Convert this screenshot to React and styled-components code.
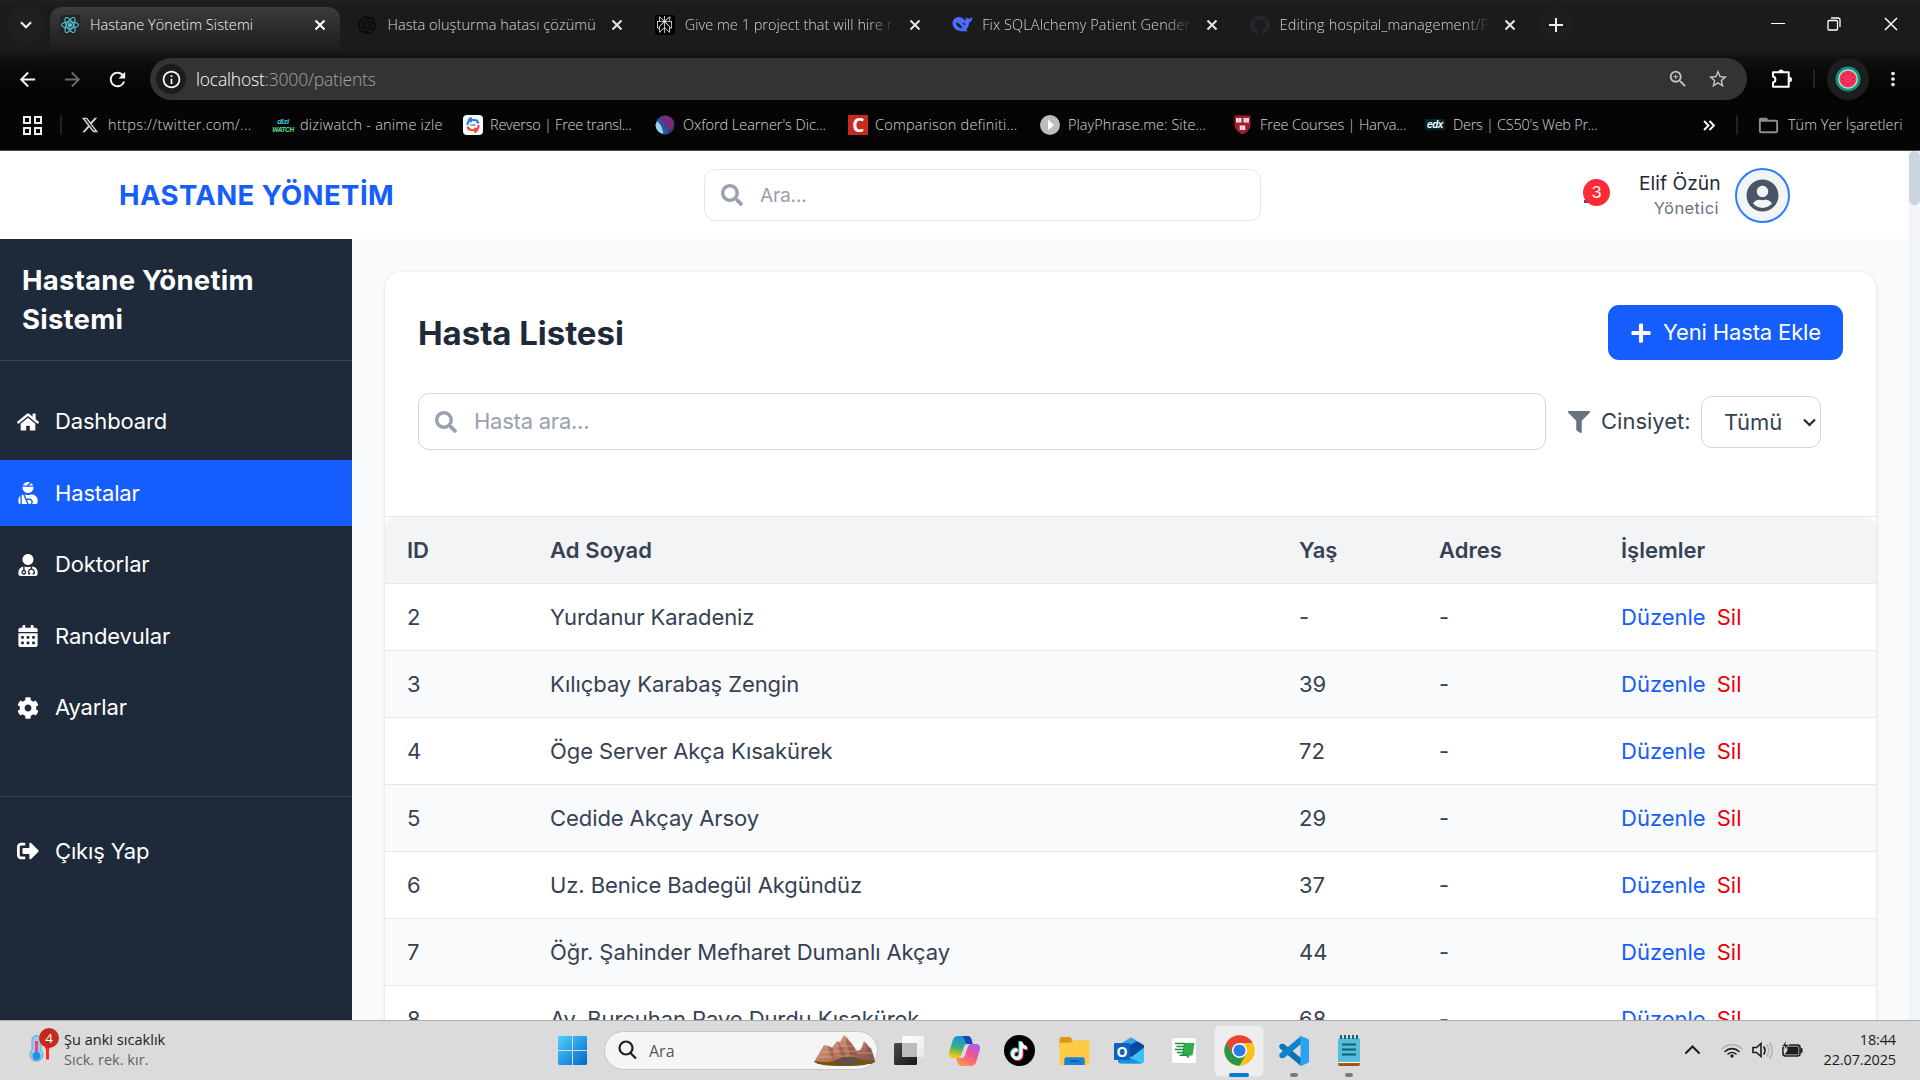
import React from 'react';
import styled, { createGlobalStyle, css } from 'styled-components';
import {
  FaHome, FaUserInjured, FaUserMd, FaCalendarAlt, FaCog, FaSignOutAlt,
  FaSearch, FaFilter, FaPlus, FaUserCircle, FaGithub, FaTiktok,
} from 'react-icons/fa';
import { FaXTwitter } from 'react-icons/fa6';
import { SiOpenai, SiPerplexity } from 'react-icons/si';
import {
  MdArrowBack, MdArrowForward, MdRefresh, MdZoomIn, MdStarBorder,
  MdMoreVert, MdFolderOpen, MdInfoOutline,
} from 'react-icons/md';

const Global = createGlobalStyle`
  * { box-sizing: border-box; }
  html, body { margin: 0; padding: 0; overflow: hidden; background: #050505; }
  svg { display: block; flex: none; }
`;

const ui = '"Open Sans", "Noto Sans", sans-serif';

const Screen = styled.div`
  width: 1920px;
  height: 1080px;
  display: flex;
  flex-direction: column;
  overflow: hidden;
  font-family: ${ui};
`;

/* ---------- browser chrome ---------- */

const Browser = styled.div`
  height: 151px;
  flex: none;
  display: flex;
  flex-direction: column;
  border-bottom: 1px solid #4e4c4e;
  background: linear-gradient(#202020 0, #1b1b1b 10px, #1b1b1b 50px, #111 58px, #0a0a0a 70px, #050505 88px);
`;

const TabStrip = styled.div`
  height: 50px;
  flex: none;
  display: flex;
  align-items: center;
  padding: 7px 0 0 9px;
`;

const TabSearch = styled.div`
  width: 33px;
  height: 35px;
  margin: 0 8px 8px 0;
  display: flex;
  align-items: center;
  justify-content: center;
  border-radius: 11px;
  background: #1f1f1f;
`;

const Tab = styled.div`
  width: 290px;
  height: 43px;
  flex: none;
  display: flex;
  align-items: center;
  padding: 0 15px 8px 10px;
  margin-right: 7.4px;
  border-radius: 12px 12px 0 0;
  background: ${(p) => (p.$active ? 'linear-gradient(#3c3c3c, #1c1c1c)' : 'transparent')};
`;

const TabIcon = styled.div`
  width: 20px;
  height: 20px;
  flex: none;
  display: flex;
  align-items: center;
  justify-content: center;
  margin-right: 10px;
  border-radius: 3px;
  background: ${(p) => p.$bg || 'transparent'};
`;

const TabTitle = styled.div`
  flex: 1;
  white-space: nowrap;
  font-size: 14.5px;
  line-height: 20px;
  letter-spacing: ${(p) => p.$ls || 0}px;
  color: ${(p) => (p.$active ? '#f4f4f4' : '#d4d4d4')};
  font-weight: 300;
  ${(p) => p.$fade && css`
    mask-image: linear-gradient(90deg, #000 calc(100% - 26px), transparent 100%);
  `}
`;

const TabClose = styled.div`
  width: 12px;
  flex: none;
  margin-left: 14px;
  margin-right: -1px;
`;

const NewTab = styled.div`
  width: 34px;
  height: 35px;
  margin: 0 0 8px 2px;
  border-radius: 17px;
  background: #1e1e1e;
  display: flex;
  align-items: center;
  justify-content: center;
`;

const WindowButtons = styled.div`
  flex: 1;
  display: flex;
  justify-content: flex-end;
  align-items: center;
  gap: 42px;
  padding: 0 21px 10px 0;
`;

const Toolbar = styled.div`
  height: 58px;
  flex: none;
  display: flex;
  align-items: center;
  padding: 0 16px;
  color: #f2f2f2;
`;

const NavButton = styled.div`
  width: 45px;
  flex: none;
  display: flex;
  color: ${(p) => (p.$dim ? '#6a6a6a' : '#f4f4f4')};
`;

const AddressBar = styled.div`
  width: 1597px;
  height: 42px;
  flex: none;
  margin: 0 24px 0 -1px;
  display: flex;
  align-items: center;
  padding: 0 18px 0 6px;
  border-radius: 21px;
  background: #333;
  font-size: 17.5px;
  font-weight: 300;
  color: #a3a3a3;
  b { font-weight: 300; color: #fff; }
`;

const SiteInfo = styled.div`
  width: 30px;
  height: 30px;
  margin-right: 10px;
  display: flex;
  align-items: center;
  justify-content: center;
  border-radius: 50%;
  background: #1c1c1c;
  color: #fff;
`;

const Url = styled.div`
  flex: 1;
  letter-spacing: -0.18px;
`;

const BarIcons = styled.div`
  display: flex;
  gap: 18px;
  color: #c4c4c4;
`;

const Divider = styled.div`
  width: 2px;
  height: 20px;
  flex: none;
  border-radius: 1px;
  background: #222;
  margin: ${(p) => p.$m};
`;

const Profile = styled.div`
  width: 42px;
  height: 42px;
  flex: none;
  margin-right: 13px;
  display: flex;
  align-items: center;
  justify-content: center;
  border-radius: 50%;
  background: #1d1d1d;
`;

const Bookmarks = styled.div`
  flex: 1;
  display: flex;
  align-items: center;
  padding: 0 17px 8px 23px;
  color: #d6d6d6;
`;

const Bookmark = styled.div`
  width: ${(p) => p.$w}px;
  flex: none;
  display: flex;
  align-items: center;
  white-space: nowrap;
  font-size: 14.5px;
  font-weight: 300;
  line-height: 20px;
  letter-spacing: ${(p) => p.$ls || 0}px;
  span { margin-left: ${(p) => p.$gap || 8}px; }
`;

const Favicon = styled.div`
  width: 20px;
  height: 20px;
  flex: none;
  display: flex;
  flex-direction: column;
  align-items: center;
  justify-content: center;
  font: ${(p) => p.$font};
  letter-spacing: -0.4px;
  background: ${(p) => p.$bg || 'transparent'};
  color: ${(p) => p.$fg || '#fff'};
  em { color: #5fe08f; font-size: 6.5px; line-height: 7px; }
`;

const Spacer = styled.div`
  flex: 1;
`;

/* ---------- application ---------- */

const Page = styled.div`
  height: 869px;
  flex: none;
  display: flex;
  overflow: hidden;
  background: #f9fafb;
  font-family: Inter, "Liberation Sans", sans-serif;
  font-size: 22px;
  line-height: 33px;
  color: #364153;
`;

const AppColumn = styled.div`
  width: 1909px;
  display: flex;
  flex-direction: column;
`;

const ScrollTrack = styled.div`
  width: 11px;
  background: #f1f5f9;
`;

const ScrollThumb = styled.div`
  height: 54px;
  border-radius: 6px;
  background: #cbd5e1;
`;

const Header = styled.header`
  height: 88px;
  flex: none;
  display: flex;
  align-items: center;
  padding: 0 119px;
  background: #fff;
`;

const Brand = styled.div`
  width: 585px;
  font-size: 27.5px;
  font-weight: 700;
  letter-spacing: 0.42px;
  color: #155dfc;
`;

const SearchBox = styled.div`
  width: ${(p) => p.$w}px;
  height: ${(p) => p.$h}px;
  display: flex;
  align-items: center;
  gap: 17px;
  padding: 0 0 0 16px;
  border: 1.4px solid ${(p) => p.$line};
  border-radius: 11px;
  background: #fff;
  font-size: ${(p) => p.$size || 22}px;
  letter-spacing: -0.24px;
  color: #99a1af;
`;

const Bell = styled.div`
  position: relative;
  width: 28px;
  height: 28px;
  margin-right: 28px;
  color: #4a5565;
`;

const Badge = styled.div`
  position: absolute;
  left: 0;
  top: -2px;
  width: 27px;
  height: 27px;
  border-radius: 50%;
  background: #fb2c36;
  color: #fff;
  font-size: 16.5px;
  line-height: 27px;
  text-align: center;
`;

const BellDrop = styled.div`
  width: 5px;
  height: 3px;
  margin: 19px 0 0 1px;
  background: #4a5565;
`;

const UserText = styled.div`
  width: 80px;
  text-align: right;
  margin: -1px 16px 0 0;
  font-size: 19.25px;
  line-height: 27px;
  white-space: nowrap;
  color: #1e2939;
  small {
    display: block;
    font-size: 16.5px;
    line-height: 22px;
    letter-spacing: 0.4px;
    color: #6a7282;
  }
`;

const Avatar = styled.div`
  width: 55px;
  height: 55px;
  display: flex;
  align-items: center;
  justify-content: center;
  border: 2px solid #2b7fff;
  border-radius: 50%;
  background: #f3f4f6;
  color: #4a5565;
`;

const Body = styled.div`
  flex: 1;
  min-height: 0;
  display: flex;
`;

const Sidebar = styled.aside`
  width: 352px;
  flex: none;
  background: #1e2939;
  color: #fff;
`;

const SideTitle = styled.div`
  height: 122px;
  padding: 22px;
  border-bottom: 1px solid #364153;
  font-size: 27.5px;
  line-height: 38.5px;
  letter-spacing: 0.24px;
  font-weight: 700;
`;

const SideNav = styled.nav`
  display: flex;
  flex-direction: column;
  gap: 5.5px;
  padding: 27.5px 0;
  & + & {
    margin-top: 27.5px;
    padding: 21.5px 0;
    border-top: 1px solid #364153;
  }
`;

const SideItem = styled.div`
  height: 66px;
  display: flex;
  align-items: center;
  gap: 16.5px;
  padding-left: 16.5px;
  letter-spacing: -0.16px;
  background: ${(p) => (p.$active ? '#155dfc' : 'transparent')};
`;

const Main = styled.main`
  flex: 1;
  padding: 33px;
`;

const Card = styled.section`
  height: 900px;
  border-radius: 16.5px;
  background: #fff;
  box-shadow: 0 1px 4px rgba(0, 0, 0, 0.13);
`;

const CardTop = styled.div`
  height: 245px;
  padding: 33px;
  border-bottom: 1px solid #e5e7eb;
`;

const TitleRow = styled.div`
  display: flex;
  align-items: center;
  justify-content: space-between;
  height: 55px;
  margin-bottom: 33px;
`;

const Title = styled.h1`
  margin: 0;
  font-size: 33px;
  line-height: 44px;
  font-weight: 700;
  letter-spacing: -0.05px;
  color: #1e2939;
`;

const AddButton = styled.div`
  width: 235px;
  height: 55px;
  display: flex;
  align-items: center;
  gap: 11px;
  padding-left: 22px;
  border-radius: 11px;
  letter-spacing: -0.15px;
  background: #155dfc;
  color: #fff;
`;

const FilterRow = styled.div`
  display: flex;
  align-items: center;
`;

const FilterLabel = styled.div`
  width: 133px;
  flex: none;
  display: flex;
  align-items: center;
  gap: 11px;
  margin-left: 22px;
  white-space: nowrap;
  svg { color: #6a7282; }
`;

const Select = styled.div`
  width: 120px;
  height: 52px;
  display: flex;
  align-items: center;
  justify-content: space-between;
  padding: 0 4px 0 22px;
  margin: 1px 0 0 0;
  border: 1.4px solid #d1d5dc;
  border-radius: 11px;
`;

const Row = styled.div`
  display: grid;
  grid-template-columns: 143px 749px 140px 182px 1fr;
  height: 67px;
  align-items: center;
  border-bottom: 1px solid #e5e7eb;
  background: ${(p) => (p.$odd ? '#f9fafb' : '#fff')};
  & > div { padding-left: 22px; white-space: nowrap; }
  & > div:nth-child(2) { letter-spacing: ${(p) => (p.$head ? 0.1 : -0.08)}px; }
  ${(p) => p.$head && css`
    background: #f3f4f6;
    border-radius: 11px 11px 0 0;
    font-weight: 600;
  `}
`;

const Actions = styled.div`
  display: flex;
  gap: 11px;
  color: #155dfc;
  span { color: #e7000b; }
`;

/* ---------- taskbar ---------- */

const Taskbar = styled.div`
  height: 60px;
  flex: none;
  display: flex;
  border-top: 1px solid #acacac;
  background: #dbdbdb;
  color: #1b1b1b;
`;

const Weather = styled.div`
  width: 530px;
  display: flex;
  padding: 2px 0 0 28px;
  gap: 4px;
  font-size: 14.5px;
  line-height: 20px;
  & > div:last-child { padding-top: 7px; letter-spacing: 0.03px; }
  small { display: block; font-size: 14.5px; color: #616161; }
`;

const Dock = styled.div`
  width: 850px;
  display: flex;
  align-items: center;
  padding-left: 28px;
`;

const StartSearch = styled.div`
  width: 274px;
  height: 39px;
  margin: 0 0 1px 17px;
  display: flex;
  align-items: center;
  padding: 0 2px 0 13px;
  border-radius: 20px;
  border: 1px solid #c6c6c6;
  background: #f5f5f5;
  font-size: 16px;
  color: #555;
  span { flex: 1; padding: 1px 0 0 11px; }
`;

const DockItem = styled.div`
  position: relative;
  width: 48px;
  height: 50px;
  margin-right: 7px;
  flex: none;
  display: flex;
  align-items: center;
  justify-content: center;
  border-radius: 5px;
  background: ${(p) => (p.$active ? '#eee' : 'transparent')};
  box-shadow: ${(p) => (p.$active ? '0 0 0 1px #e3e3e3' : 'none')};
`;

const Running = styled.i`
  position: absolute;
  bottom: -1px;
  width: ${(p) => (p.$active ? 20 : 8)}px;
  height: 4px;
  border-radius: 2px;
  background: ${(p) => (p.$active ? '#0a78d4' : '#7b7b7b')};
`;

const Tray = styled.div`
  flex: 1;
  display: flex;
  align-items: center;
  justify-content: flex-end;
  padding: 0 24px 2px 0;
`;

const Clock = styled.div`
  width: 93px;
  text-align: right;
  font-size: 14.5px;
  line-height: 20px;
  letter-spacing: -0.15px;
  white-space: nowrap;
`;

/* ---------- drawings ---------- */

const Cross = ({ color = '#e6e6e6', size = 12, w = 2 }) => (
  <svg width={size} height={size} viewBox="0 0 12 12" stroke={color} strokeWidth={w}>
    <path d="M1.5 1.5l9 9M10.5 1.5l-9 9" />
  </svg>
);

const ReactMark = () => (
  <svg width="20" height="20" viewBox="0 0 20 20" fill="none" stroke="#58c4dc" strokeWidth="1.1">
    <rect width="20" height="20" rx="2" fill="#242424" stroke="none" />
    <ellipse cx="10" cy="10" rx="8.5" ry="3.3" />
    <ellipse cx="10" cy="10" rx="8.5" ry="3.3" transform="rotate(60 10 10)" />
    <ellipse cx="10" cy="10" rx="8.5" ry="3.3" transform="rotate(120 10 10)" />
    <circle cx="10" cy="10" r="1.5" fill="#58c4dc" />
  </svg>
);

const Whale = () => (
  <svg width="21" height="17" viewBox="0 0 21 17">
    <path fill="#4d6bfe" d="M.5 6.5C1 3 4 1 7.500 1c1.500 0 2 .8 3.500 1.600C12 3.200 12.500 4 13.500 4.600c.5-1 .4-2 1-3.600.4 1 .9 1.500 2 1.600 1.300.1 2.500-.6 4-1.100-.2 2.500-1.200 4.300-3.300 5-.3 3.300-1.200 5.300-3.200 7 .6.5 1.300.8 2 1.200-1.800.9-3.700.8-5 .4C5.500 16.200.2 12 .5 6.500z" />
    <path fill="#1c1c1c" d="M4 6.500c2.500 0 5 2.500 6.500 5.500-2.500.3-6-1.200-6.500-5.500zM10.500 6.800c1.400-.2 2.600.6 3.200 2.200-1.400.2-2.600-.6-3.200-2.200z" />
  </svg>
);

const Puzzle = () => (
  <svg width="22" height="22" viewBox="0 0 22 22">
    <path d="M2 4.200h15.700v14.600H2v-4.300c1.500-.3 2.400-1.500 2.400-3S3.500 8.800 2 8.500z" fill="none" stroke="#fff" strokeWidth="2" strokeLinejoin="round" />
    <path d="M7.300 4.500a2.700 3 0 0 1 5.400 0zM18 8.800a3 2.700 0 0 1 0 5.400z" fill="#fff" />
  </svg>
);

const Melon = () => (
  <svg width="26" height="26" viewBox="0 0 26 26">
    <circle cx="13" cy="13" r="12.500" fill="#0e9384" />
    <circle cx="13" cy="13" r="9.800" fill="#b9ecd9" />
    <circle cx="13" cy="13" r="8.600" fill="#f2325a" />
    <g fill="#8d1d3c">
      <circle cx="9" cy="9" r=".7" /><circle cx="13" cy="7.500" r=".7" /><circle cx="17" cy="9" r=".7" />
      <circle cx="7.500" cy="13" r=".7" /><circle cx="18.500" cy="13" r=".7" />
      <circle cx="9" cy="17" r=".7" /><circle cx="13" cy="18.500" r=".7" /><circle cx="17" cy="17" r=".7" />
    </g>
  </svg>
);

const Shield = () => (
  <svg width="17" height="20" viewBox="0 0 17 20">
    <path d="M.5.5h16v9c0 5-4 8-8 10-4-2-8-5-8-10z" fill="#a51c30" />
    <path d="M2 3h5.500v4.500H2zM9.500 3H15v4.500H9.500zM5.700 10.500h5.600V15H5.700z" fill="#f1dfe1" />
    <path d="M4.700 3v4.500M12.300 3v4.500M8.500 10.500V15" stroke="#d9a5ac" strokeWidth=".8" />
  </svg>
);

const Reverso = () => (
  <svg width="20" height="20" viewBox="0 0 20 20" fill="none" strokeWidth="2.200">
    <rect width="20" height="20" rx="4" fill="#f7f9fb" />
    <path d="M4.500 10V9a4 4 0 0 1 4-4h3a4 4 0 0 1 3.800 3.500M8.500 2.500L6 5l2.500 2" stroke="#2d7de0" />
    <path d="M15.500 10v1a4 4 0 0 1-4 4h-3a4 4 0 0 1-3.800-3.500M11.500 17.500L14 15l-2.500-2" stroke="#ee4a3a" />
    <path d="M7.500 10h5" stroke="#2b5fa8" strokeWidth="1.500" strokeDasharray="1.200 .6" />
  </svg>
);

const Oxford = () => (
  <svg width="20" height="20" viewBox="0 0 20 20">
    <circle cx="10" cy="10" r="9.500" fill="#24407e" />
    <path d="M8 .8a9.500 9.500 0 0 1 11.300 7.500C17 13 14 15 13 17 12 11 8 6 4 3.500A9 9 0 0 1 8 .8z" fill="#7b2a78" />
    <path d="M2 6c4 3 6 8 6.500 13A9.500 9.500 0 0 1 .5 10z" fill="#9fd3ea" />
    <path d="M4 3.500C9 7 12 12 12.500 19L8.500 19.300C8 13 6 9 2 6z" fill="#2858a8" />
  </svg>
);

const Play = () => (
  <svg width="20" height="20" viewBox="0 0 20 20">
    <circle cx="10" cy="10" r="10" fill="#bcbcbc" />
    <path d="M8 4.500l6 5.500-6 5.500z" fill="#fff" />
  </svg>
);

const Windows = () => (
  <svg width="29" height="29" viewBox="0 0 29 29">
    <defs>
      <linearGradient id="win" gradientUnits="userSpaceOnUse" x1="0" y1="0" x2="29" y2="29">
        <stop stopColor="#4fd0ff" /><stop offset="1" stopColor="#0067c8" />
      </linearGradient>
    </defs>
    <path fill="url(#win)" d="M1 0h13v14H0V1zM15 0h13l1 1v13H15zM0 15h14v14H1l-1-1zM15 15h14v13l-1 1H15z" />
  </svg>
);

const Mountain = () => (
  <svg width="61" height="31" viewBox="0 0 61 31">
    <defs>
      <linearGradient id="rock" x1="0" x2="1" y1="0" y2="1">
        <stop stopColor="#e0a98c" /><stop offset=".5" stopColor="#bd7a62" /><stop offset="1" stopColor="#6f4a49" />
      </linearGradient>
    </defs>
    <path d="M0 27l3-5 4-7 3-5 5 1 3 2 5-7 3 1 4-7 5 6 3 3 5 7 3-1 2-3 2-6 5 6 2 1 3 9 1 5-4 2H4z" fill="url(#rock)" />
    <path d="M32 1l1 10 5 13 5-3-5-12zM52 7l1 9 5 7-2-9zM14 11l2 9 4 6-1-13zM24 7l1 9 5 9 1-9z" fill="#7d4740" opacity=".5" />
    <path d="M8 17h12M22 11h16M20 16h22M44 18h14M5 22h14M24 21h17" stroke="#f0c3a8" strokeWidth=".8" opacity=".55" />
    <path d="M0 26c8 1 16 2 22-1 8-4 18-4 24-1 5 2 10 2 14 2-4 4-12 5-30 5S3 30 0 26z" fill="#74540f" />
    <path d="M20 27c5-5 20-6 27-1-6 4-20 4-27 1z" fill="#5f514d" />
  </svg>
);

const TaskView = () => (
  <svg width="30" height="31" viewBox="0 0 30 31">
    <defs>
      <linearGradient id="tv" x1="0" x2="1" y1="0" y2="1"><stop stopColor="#4a4a4a" /><stop offset="1" stopColor="#161616" /></linearGradient>
      <linearGradient id="tw" x1="0" x2="1" y1="0" y2="1"><stop stopColor="#fff" /><stop offset="1" stopColor="#e9e9e9" /></linearGradient>
    </defs>
    <rect y="8" width="23" height="22" rx="1.500" fill="url(#tv)" />
    <rect x="8" y="1" width="22" height="21" rx="1.500" fill="url(#tw)" />
    <path d="M8 8h15v14H9.500L8 20.500z" fill="#bdbdbd" />
  </svg>
);

const Copilot = () => (
  <svg width="31" height="30" viewBox="0 0 31 30">
    <defs>
      <linearGradient id="cpa" x1=".3" x2=".1" y1="0" y2="1"><stop stopColor="#1b8fe8" /><stop offset=".5" stopColor="#3fb07a" /><stop offset=".9" stopColor="#f2c80f" /></linearGradient>
      <linearGradient id="cpb" x1=".8" x2=".2" y1="0" y2="1"><stop stopColor="#a55cf0" /><stop offset=".45" stopColor="#f0568f" /><stop offset="1" stopColor="#ff9a4a" /></linearGradient>
    </defs>
    <path d="M9 0h9c3 0 4 1.500 5 5l.6 3H19c-2.500 0-3.500 1-4.300 3.500L12 19.500c-.7 2-2 2.500-4 2.500H4c-3.500 0-4.500-2.500-3.800-6L3.500 5C4.500 1.500 6 0 9 0z" fill="url(#cpa)" />
    <path d="M16 0h2c3 0 4 1.500 5 5l.6 3H19c-2 0-3-2-3.600-4.500C15 1.800 14 0 12 0z" fill="#1747b5" />
    <path d="M22 30h-9c-3 0-4-1.500-5-5l-.8-3H12c2.500 0 3.500-1 4.300-3.500L19 10.500C19.700 8.500 21 8 23 8h4c3.500 0 4.500 2.500 3.800 6L27.500 25c-1 3.500-2.500 5-5.500 5z" fill="url(#cpb)" />
  </svg>
);

const TikTokDisc = styled.div`
  width: 31px;
  height: 31px;
  display: flex;
  align-items: center;
  justify-content: center;
  border-radius: 50%;
  background: #000;
  color: #fff;
  svg { filter: drop-shadow(-1px -1px 0 #25f4ee) drop-shadow(1px 1px 0 #fe2c55); }
`;

const Folder = () => (
  <svg width="31" height="28" viewBox="0 0 31 29">
    <path d="M0 2Q0 0 2 0h8q1 0 2 1l2 3h15v6H0z" fill="#dc9a0b" />
    <path d="M0 6h11l3-2.500h15.500q1.500 0 1.500 1.500v24H0z" fill="#fdcb45" />
    <path d="M5 29v-6q0-2 2-2h17q2 0 2 2v6z" fill="#1a7fd6" />
    <path d="M11 25h9" stroke="#0c4f96" strokeWidth="1.500" />
  </svg>
);

const OutlookLetter = styled.div`
  position: absolute;
  left: 9px;
  top: 17px;
  width: 16px;
  height: 17px;
  border-radius: 1px;
  background: #0f62bd;
  color: #fff;
  font: 700 14px/17px "Open Sans", sans-serif;
  text-align: center;
`;

const Outlook = () => (
  <svg width="31" height="28" viewBox="0 0 31 27">
    <path d="M4 8L17 0l13 8v5H4z" fill="#1a78cf" />
    <path d="M4 8l13-8 5 3L9 13H4z" fill="#3aa3ea" />
    <path d="M10 10L24 4l6 4v3L17 20z" fill="#0b4aa2" />
    <path d="M30 10v13q0 3-3 3H7q-3 0-3-3v-9l12 7z" fill="#35c2f6" />
    <path d="M4 14l24 12H7q-3 0-3-3z" fill="#1d8fe0" />
  </svg>
);

const GreenNote = () => (
  <svg width="24" height="25" viewBox="0 0 24 25">
    <rect width="24" height="25" rx="2.500" fill="#fff" />
    <path d="M12 5h10.500l-2 12.500h-3l-1 3-3-3H10z" fill="#2fae4e" />
    <path d="M3 5.500h10M4.500 8.500h8M3 11.500h9M5 14.500h7M7.500 17.300h8" stroke="#1e8f3e" strokeWidth="1.500" />
  </svg>
);

const ChromeMark = () => (
  <svg width="31" height="31" viewBox="0 0 48 48">
    <circle cx="24" cy="24" r="23.500" fill="#fbc116" />
    <path d="M3.650 12.250A23.500 23.500 0 0 1 44.350 12.250H24L13.600 30z" fill="#ea4335" />
    <path d="M3.650 12.250A23.500 23.500 0 0 0 24 47.500l10.200-17.600H13.800z" fill="#279847" />
    <circle cx="24" cy="24" r="11.750" fill="#fff" />
    <circle cx="24" cy="24" r="9.300" fill="#2c7be8" />
  </svg>
);

const Code = () => (
  <svg width="30" height="30" viewBox="0 0 30 30">
    <path d="M0 10l2-2.200L5 8l17 14v8L1 12.500z" fill="#1070b3" />
    <path d="M0 20l2 2.200L5 22 22 8V0L1 17.500z" fill="#0d83cf" />
    <path d="M22 0l7 3q1 .5 1 1.500v21q0 1-1 1.500l-7 3-2-1q1.500.3 1.500-2V3q0-2.300-1.500-2z" fill="#2ba1f2" />
  </svg>
);

const Notepad = () => (
  <svg width="23" height="31" viewBox="0 0 23 31">
    <rect x="0" y="3" width="22" height="26" rx="2" fill="#54bdd8" />
    <path d="M0 28h22v1q0 2-2 2H2q-2 0-2-2z" fill="#a1500f" />
    <path d="M0 27.500h22" stroke="#f3f3f3" strokeWidth="1.200" />
    <path d="M4 9.500h14M4 14.500h14M4 19.500h14" stroke="#0e5e78" strokeWidth="1.800" />
    <path d="M3 0v4M7 0v4M11 0v4M15 0v4M19 0v4" stroke="#16617b" strokeWidth="2" />
  </svg>
);

const Thermometer = () => (
  <svg width="32" height="48" viewBox="0 0 32 48">
    <path d="M4 17a4 4 0 0 1 9 0v10a6.500 6.500 0 1 1-9 0z" fill="#9cc8ee" stroke="#6a9fd0" />
    <path d="M8.500 18v14" stroke="#e8467c" strokeWidth="3" />
    <circle cx="8.500" cy="33" r="4" fill="#1596e8" />
    <path d="M19.500 24v12.500" stroke="#fc2b1a" strokeWidth="3" />
    <path d="M17 24.500h5" stroke="#fc2b1a" strokeWidth="2" />
  </svg>
);

const ThermoBox = styled.div`
  position: relative;
  width: 32px;
`;

const Alert = styled.div`
  position: absolute;
  left: 11px;
  top: 5px;
  width: 20px;
  height: 20px;
  border-radius: 50%;
  background: #c42b1c;
  color: #fff;
  font-size: 13.5px;
  line-height: 20px;
  text-align: center;
`;

const TrayIcons = () => (
  <svg width="118" height="24" viewBox="0 0 118 24" fill="none" stroke="#1c1c1c" strokeWidth="1.600" strokeLinecap="round">
    <path d="M1 15l6.500-6.500L14 15" strokeWidth="2" />
    <path d="M37 11a14 14 0 0 1 20 0" stroke="#b0b0b0" />
    <path d="M40 13.500a10 10 0 0 1 14 0M43 16a6 6 0 0 1 8 0" />
    <circle cx="47" cy="18" r="1.700" fill="#1c1c1c" stroke="none" />
    <path d="M68 9.500h3.500l4.500-4v13l-4.500-4H68z" />
    <path d="M79 9q2 3.500 0 7" />
    <path d="M82 7q3.500 5.500 0 11M85 5q4.500 7.500 0 15" stroke="#b3b3b3" />
    <rect x="98" y="7" width="17" height="11" rx="2.500" />
    <path d="M102 8.500h11.500v8h-14l3-4z" fill="#1c1c1c" stroke="none" />
    <path d="M116.500 11v3" strokeWidth="2" />
    <path d="M101 2.500l-4 6h3l-1 4 5-6h-3z" fill="#1c1c1c" stroke="#dbdbdb" strokeWidth=".7" />
  </svg>
);

const people = [
  ['2', 'Yurdanur Karadeniz', '-'],
  ['3', 'Kılıçbay Karabaş Zengin', '39'],
  ['4', 'Öge Server Akça Kısakürek', '72'],
  ['5', 'Cedide Akçay Arsoy', '29'],
  ['6', 'Uz. Benice Badegül Akgündüz', '37'],
  ['7', 'Öğr. Şahinder Mefharet Dumanlı Akçay', '44'],
  ['8', 'Av. Burcuhan Paye Durdu Kısakürek', '68'],
];

const menu = [
  [FaHome, 'Dashboard'],
  [FaUserInjured, 'Hastalar'],
  [FaUserMd, 'Doktorlar'],
  [FaCalendarAlt, 'Randevular'],
  [FaCog, 'Ayarlar'],
];

const logoFont = 'italic 700 8px/8px "Liberation Sans", sans-serif';
const edxFont = 'italic 700 10px/12px "Liberation Sans", sans-serif';
const letterFont = '700 19px/20px "Open Sans", sans-serif';

function BrowserChrome() {
  return (
    <Browser>
      <TabStrip>
        <TabSearch>
          <svg width="12" height="8" viewBox="0 0 12 8" fill="none" stroke="#f0f0f0" strokeWidth="2.200"><path d="M1 1.200l5 5 5-5" /></svg>
        </TabSearch>
        <Tab $active>
          <TabIcon><ReactMark /></TabIcon>
          <TabTitle $active $ls={0.05}>Hastane Yönetim Sistemi</TabTitle>
          <TabClose><Cross color="#fff" /></TabClose>
        </Tab>
        <Tab>
          <TabIcon><SiOpenai size={18} color="#050505" /></TabIcon>
          <TabTitle $ls={0.08}>Hasta oluşturma hatası çözümü</TabTitle>
          <TabClose><Cross /></TabClose>
        </Tab>
        <Tab>
          <TabIcon $bg="#000"><SiPerplexity size={17} color="#e8e8e0" /></TabIcon>
          <TabTitle $fade $ls={0.02}>Give me 1 project that will hire r</TabTitle>
          <TabClose><Cross /></TabClose>
        </Tab>
        <Tab>
          <TabIcon><Whale /></TabIcon>
          <TabTitle $fade $ls={0.1}>Fix SQLAlchemy Patient Gender</TabTitle>
          <TabClose><Cross /></TabClose>
        </Tab>
        <Tab>
          <TabIcon><FaGithub size={20} color="#24292f" /></TabIcon>
          <TabTitle $fade $ls={0.15}>Editing hospital_management/F</TabTitle>
          <TabClose><Cross /></TabClose>
        </Tab>
        <NewTab>
          <svg width="14" height="14" stroke="#eee" strokeWidth="2"><path d="M7 0v14M0 7h14" /></svg>
        </NewTab>
        <WindowButtons>
          <svg width="14" height="14" stroke="#fff"><path d="M0 6.500h14" /></svg>
          <svg width="14" height="14" stroke="#fff" fill="none" strokeWidth="1.300"><rect x="1" y="3.500" width="9.500" height="9.500" rx="1" /><path d="M4 1h7q2 0 2 2v7" /></svg>
          <Cross color="#fff" size={16} w={1.1} />
        </WindowButtons>
      </TabStrip>
      <Toolbar>
        <NavButton><MdArrowBack size={23} /></NavButton>
        <NavButton $dim><MdArrowForward size={23} /></NavButton>
        <NavButton><MdRefresh size={23} /></NavButton>
        <AddressBar>
          <SiteInfo><MdInfoOutline size={21} /></SiteInfo>
          <Url><b>localhost</b>:3000/patients</Url>
          <BarIcons><MdZoomIn size={22} /><MdStarBorder size={22} /></BarIcons>
        </AddressBar>
        <Puzzle />
        <Divider $m="0 12px 0 20px" />
        <Profile><Melon /></Profile>
        <MdMoreVert size={22} />
      </Toolbar>
      <Bookmarks>
        <svg width="19" height="19" fill="none" stroke="#eee" strokeWidth="2"><path d="M1 1h6v6H1zM12 1h6v6h-6zM1 12h6v6H1zM12 12h6v6h-6z" /></svg>
        <Divider $m="0 19px 0 18px" />
        <Bookmark $w={192} $gap={9} $ls={0.33}><FaXTwitter size={18} /><span>https://twitter.com/...</span></Bookmark>
        <Bookmark $w={190} $gap={7} $ls={0.22}><Favicon $font={logoFont} $fg="#3fc6d8">dizi<em>WATCH</em></Favicon><span>diziwatch - anime izle</span></Bookmark>
        <Bookmark $w={192} $gap={7} $ls={-0.24}><Reverso /><span>Reverso | Free transl...</span></Bookmark>
        <Bookmark $w={193} $ls={-0.05}><Oxford /><span>Oxford Learner's Dic...</span></Bookmark>
        <Bookmark $w={192} $gap={7} $ls={0.22}><Favicon $bg="#c62a21" $font={letterFont}>C</Favicon><span>Comparison definiti...</span></Bookmark>
        <Bookmark $w={194} $ls={0.05}><Play /><span>PlayPhrase.me: Site...</span></Bookmark>
        <Bookmark $w={191} $gap={9} $ls={-0.15}><Shield /><span>Free Courses | Harva...</span></Bookmark>
        <Bookmark $w={219} $gap={8} $ls={-0.27}><Favicon $font={edxFont} $bg="linear-gradient(transparent 4px, #06262e 4px, #06262e 15px, transparent 15px)">edx</Favicon><span>Ders | CS50's Web Pr...</span></Bookmark>
        <Spacer />
        <svg width="12" height="11" fill="none" stroke="#fff" strokeWidth="1.900"><path d="M1 1l4.500 4.500L1 10M6.500 1L11 5.500 6.500 10" /></svg>
        <Divider $m="0 19px 0 21px" />
        <Bookmark $w={146} $gap={8}><MdFolderOpen size={23} color="#8d8d8d" /><span>Tüm Yer İşaretleri</span></Bookmark>
      </Bookmarks>
    </Browser>
  );
}

function HospitalApp() {
  return (
    <Page>
      <AppColumn>
        <Header>
          <Brand>HASTANE YÖNETİM</Brand>
          <SearchBox $w={557} $h={52} $line="#e5e7eb" $size={19.25}><FaSearch size={22} />Ara...</SearchBox>
          <Spacer />
          <Bell><BellDrop /><Badge>3</Badge></Bell>
          <UserText>Elif Özün<small>Yönetici</small></UserText>
          <Avatar><FaUserCircle size={33} /></Avatar>
        </Header>
        <Body>
          <Sidebar>
            <SideTitle>Hastane Yönetim Sistemi</SideTitle>
            <SideNav>
              {menu.map(([Icon, label]) => (
                <SideItem key={label} $active={label === 'Hastalar'}><Icon size={22} />{label}</SideItem>
              ))}
            </SideNav>
            <SideNav><SideItem><FaSignOutAlt size={22} />Çıkış Yap</SideItem></SideNav>
          </Sidebar>
          <Main>
            <Card>
              <CardTop>
                <TitleRow>
                  <Title>Hasta Listesi</Title>
                  <AddButton><FaPlus size={22} />Yeni Hasta Ekle</AddButton>
                </TitleRow>
                <FilterRow>
                  <SearchBox $w={1128} $h={57} $line="#d1d5dc"><FaSearch size={22} />Hasta ara...</SearchBox>
                  <FilterLabel><FaFilter size={22} />Cinsiyet:</FilterLabel>
                  <Select>
                    Tümü
                    <svg width="13" height="9" fill="none" stroke="#1e2939" strokeWidth="2.200"><path d="M1 1.500l5.500 5.500L12 1.500" /></svg>
                  </Select>
                </FilterRow>
              </CardTop>
              <Row $head>
                <div>ID</div><div>Ad Soyad</div><div>Yaş</div><div>Adres</div><div>İşlemler</div>
              </Row>
              {people.map(([id, name, age], i) => (
                <Row key={id} $odd={i % 2 === 1}>
                  <div>{id}</div><div>{name}</div><div>{age}</div><div>-</div>
                  <Actions>Düzenle<span>Sil</span></Actions>
                </Row>
              ))}
            </Card>
          </Main>
        </Body>
      </AppColumn>
      <ScrollTrack><ScrollThumb /></ScrollTrack>
    </Page>
  );
}

function WindowsTaskbar() {
  return (
    <Taskbar>
      <Weather>
        <ThermoBox><Thermometer /><Alert>4</Alert></ThermoBox>
        <div>Şu anki sıcaklık<small>Sıck. rek. kır.</small></div>
      </Weather>
      <Dock>
        <Windows />
        <StartSearch>
          <svg width="20" height="20" fill="none" stroke="#1e1e1e" strokeWidth="2.200"><circle cx="8" cy="8" r="6.500" /><path d="M12.500 13l5.500 5.500" /></svg>
          <span>Ara</span>
          <Mountain />
        </StartSearch>
        <Spacer />
        <DockItem><TaskView /></DockItem>
        <DockItem><Copilot /></DockItem>
        <DockItem><TikTokDisc><FaTiktok size={18} /></TikTokDisc></DockItem>
        <DockItem><Folder /></DockItem>
        <DockItem><Outlook /><OutlookLetter>O</OutlookLetter></DockItem>
        <DockItem><GreenNote /></DockItem>
        <DockItem $active><ChromeMark /><Running $active /></DockItem>
        <DockItem><Code /><Running /></DockItem>
        <DockItem><Notepad /><Running /></DockItem>
      </Dock>
      <Tray>
        <TrayIcons />
        <Clock>18:44<br />22.07.2025</Clock>
      </Tray>
    </Taskbar>
  );
}

export default function App() {
  return (
    <Screen>
      <Global />
      <BrowserChrome />
      <HospitalApp />
      <WindowsTaskbar />
    </Screen>
  );
}
